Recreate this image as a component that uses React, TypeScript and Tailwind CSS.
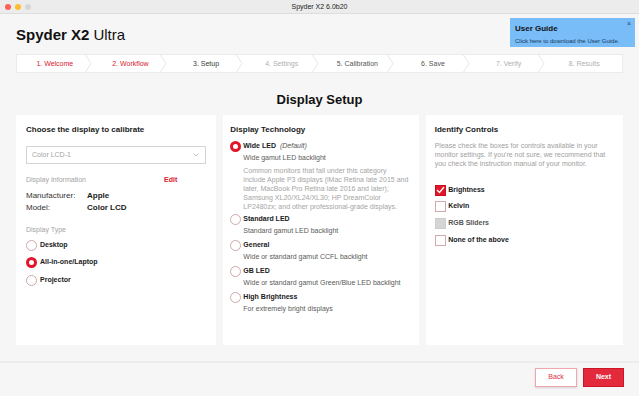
import React from "react";

const steps = [
  { label: "1. Welcome", color: "text-[#d9202e]" },
  { label: "2. Workflow", color: "text-[#d9202e]" },
  { label: "3. Setup", color: "text-[#3a3a3a]" },
  { label: "4. Settings", color: "text-[#b0b0b0]" },
  { label: "5. Calibration", color: "text-[#555]" },
  { label: "6. Save", color: "text-[#555]" },
  { label: "7. Verify", color: "text-[#b0b0b0]" },
  { label: "8. Results", color: "text-[#b0b0b0]" },
];

const technologies = [
  { name: "Standard LED", sub: "Standard gamut LED backlight" },
  { name: "General", sub: "Wide or standard gamut CCFL backlight" },
  { name: "GB LED", sub: "Wide or standard gamut Green/Blue LED backlight" },
  { name: "High Brightness", sub: "For extremely bright displays" },
];

function Radio({ checked }: { checked?: boolean }) {
  return checked ? (
    <span className="w-[11px] h-[11px] shrink-0 rounded-full border-[3px] border-[#e1162b] bg-white" />
  ) : (
    <span className="w-[11px] h-[11px] shrink-0 rounded-full border border-[#cfa9ab] bg-white" />
  );
}

function Checkbox({ state }: { state: "on" | "off" | "disabled" }) {
  if (state === "on")
    return (
      <span className="w-[11px] h-[11px] shrink-0 flex items-center justify-center bg-[#e1162b] border border-[#c8101f]">
        <svg width="9" height="8" viewBox="0 0 9 8">
          <polyline points="1,4 3.5,6.5 8,1" fill="none" stroke="white" strokeWidth="1.3" />
        </svg>
      </span>
    );
  if (state === "disabled")
    return <span className="w-[11px] h-[11px] shrink-0 bg-[#d5d5d5] border border-[#cdcdcd]" />;
  return <span className="w-[11px] h-[11px] shrink-0 bg-white border border-[#d2aaad]" />;
}

export default function App() {
  return (
    <div className="relative w-[639px] h-[396px] overflow-hidden bg-[#f6f6f6] flex flex-col font-['Liberation_Sans',Arial,sans-serif] text-[#1a1a1a]">
      {/* title bar */}
      <div className="relative h-[14px] shrink-0 bg-[#ececec] border-b border-[#dddddd] flex items-center px-[5px] gap-[4px]">
        <span className="w-[6px] h-[6px] rounded-full bg-[#fe5f57]" />
        <span className="w-[6px] h-[6px] rounded-full bg-[#febc2e]" />
        <span className="w-[6px] h-[6px] rounded-full bg-[#d6d6d6]" />
        <span className="absolute inset-0 flex items-center justify-center text-[7px] text-[#222] leading-none">
          Spyder X2 6.0b20
        </span>
      </div>

      {/* app header */}
      <div className="h-[40px] shrink-0 flex items-center pl-[16px] text-[15px] leading-none text-[#111]">
        <span className="font-bold">Spyder X2</span>
        <span className="ml-[4px]">Ultra</span>
      </div>

      {/* stepper */}
      <div className="mx-[16px] h-[19px] shrink-0 bg-white border border-[#ebebeb] flex">
        {steps.map((s, i) => (
          <div key={s.label} className="relative flex-1 flex items-center justify-center">
            <span className={`text-[7px] leading-none ${s.color}`}>{s.label}</span>
            {i < steps.length - 1 && (
              <svg
                className="absolute right-[1px] top-0"
                width="7"
                height="17"
                viewBox="0 0 7 17"
              >
                <polyline points="0.5,0 6,8.5 0.5,17" fill="none" stroke="#e6e6e6" strokeWidth="1" />
              </svg>
            )}
          </div>
        ))}
      </div>

      {/* heading */}
      <div className="pt-[19px] pb-[7px] shrink-0 text-center text-[13px] leading-[16px] font-bold text-[#111]">
        Display Setup
      </div>

      {/* panels */}
      <div className="h-[230px] shrink-0 px-[16px] flex gap-[7px]">
        {/* left */}
        <div className="flex-1 bg-white pl-[10px] pr-[10px] pt-[10px] flex flex-col">
          <div className="text-[8px] leading-[10px] font-bold">Choose the display to calibrate</div>
          <div className="mt-[11px] h-[18px] border border-[#d4d4d4] flex items-center justify-between pl-[5px] pr-[6px]">
            <span className="text-[7px] text-[#a5a5a5]">Color LCD-1</span>
            <svg width="6" height="4" viewBox="0 0 6 4">
              <polyline points="0.5,0.5 3,3 5.5,0.5" fill="none" stroke="#b5b5b5" strokeWidth="0.8" />
            </svg>
          </div>
          <div className="mt-[11px] flex text-[7px] leading-[9px]">
            <span className="w-[138px] text-[#a3a3a3]">Display Information</span>
            <span className="font-bold text-[#d9202e]">Edit</span>
          </div>
          <div className="mt-[6px] text-[8px] leading-[12px]">
            <div className="flex">
              <span className="w-[61px] text-[#333]">Manufacturer:</span>
              <span className="font-bold">Apple</span>
            </div>
            <div className="flex">
              <span className="w-[61px] text-[#333]">Model:</span>
              <span className="font-bold">Color LCD</span>
            </div>
          </div>
          <div className="mt-[11px] text-[7px] leading-[9px] text-[#a3a3a3]">Display Type</div>
          <div className="mt-[5px] flex flex-col gap-[5.5px]">
            {["Desktop", "All-in-one/Laptop", "Projector"].map((t) => (
              <div key={t} className="h-[12px] flex items-center gap-[3px]">
                <Radio checked={t === "All-in-one/Laptop"} />
                <span className="text-[7px] font-bold">{t}</span>
              </div>
            ))}
          </div>
        </div>

        {/* middle */}
        <div className="flex-1 bg-white pl-[7px] pr-[8px] pt-[10px] flex flex-col">
          <div className="text-[8px] leading-[10px] font-bold">Display Technology</div>
          <div className="mt-[5px] h-[12px] flex items-center gap-[2px]">
            <Radio checked />
            <span className="text-[7px] font-bold">Wide LED</span>
            <span className="text-[7px] italic text-[#555] ml-[2px]">(Default)</span>
          </div>
          <div className="pl-[13px] text-[7px] leading-[12px] text-[#5a5a5a]">Wide gamut LED backlight</div>
          <div className="pl-[13px] mt-[1.5px] text-[7px] leading-[9px] text-[#a5a5a5] whitespace-nowrap">
            <div>Common monitors that fall under this category</div>
            <div>include Apple P3 displays (iMac Retina late 2015 and</div>
            <div>later, MacBook Pro Retina late 2016 and later);</div>
            <div>Samsung XL20/XL24/XL30; HP DreamColor</div>
            <div>LP2480zx; and other professional-grade displays.</div>
          </div>
          <div className="mt-[2.5px] flex flex-col gap-[2px]">
            {technologies.map((t) => (
              <div key={t.name}>
                <div className="h-[12px] flex items-center gap-[2px]">
                  <Radio />
                  <span className="text-[7px] font-bold">{t.name}</span>
                </div>
                <div className="pl-[13px] text-[7px] leading-[12px] text-[#5a5a5a]">{t.sub}</div>
              </div>
            ))}
          </div>
        </div>

        {/* right */}
        <div className="flex-1 bg-white pl-[9px] pr-[8px] pt-[10px] flex flex-col">
          <div className="text-[8px] leading-[10px] font-bold">Identify Controls</div>
          <div className="mt-[6px] text-[7px] leading-[9px] text-[#a0a0a0] whitespace-nowrap">
            <div>Please check the boxes for controls available in your</div>
            <div>monitor settings. If you're not sure, we recommend that</div>
            <div>you check the instruction manual of your monitor.</div>
          </div>
          <div className="mt-[16.5px] flex flex-col gap-[5.7px]">
            {[
              { t: "Brightness", s: "on" as const },
              { t: "Kelvin", s: "off" as const },
              { t: "RGB Sliders", s: "disabled" as const },
              { t: "None of the above", s: "off" as const },
            ].map((c) => (
              <div key={c.t} className="h-[11px] flex items-center gap-[2.5px]">
                <Checkbox state={c.s} />
                <span className={`text-[7px] font-bold ${c.s === "disabled" ? "text-[#555]" : ""}`}>{c.t}</span>
              </div>
            ))}
          </div>
        </div>
      </div>

      {/* footer */}
      <div className="mt-[16px] border-t-2 border-[#ececec] pt-[5px] pr-[15px] flex justify-end gap-[6px]">
        <button className="w-[42px] h-[19px] bg-white border border-[#f0a7ae] text-[#e0303f] text-[7px] shadow-[0_1px_2px_rgba(0,0,0,0.15)]">
          Back
        </button>
        <button className="w-[41px] h-[19px] bg-[#e3293c] border border-[#cc1526] text-white text-[7px] font-bold">
          Next
        </button>
      </div>

      {/* user guide notification */}
      <div className="absolute left-[510px] top-[18px] w-[125px] h-[29px] bg-[#78bdf7] pl-[5px] pt-[6px]">
        <div className="text-[8px] leading-[10px] font-bold text-[#111]">User Guide</div>
        <div className="mt-[3px] text-[6px] leading-[8px] text-[#1c3a5a]">Click here to download the User Guide.</div>
        <span className="absolute right-[4px] top-[2px] text-[7px] leading-none text-[#2a4a6a]">×</span>
      </div>
    </div>
  );
}
